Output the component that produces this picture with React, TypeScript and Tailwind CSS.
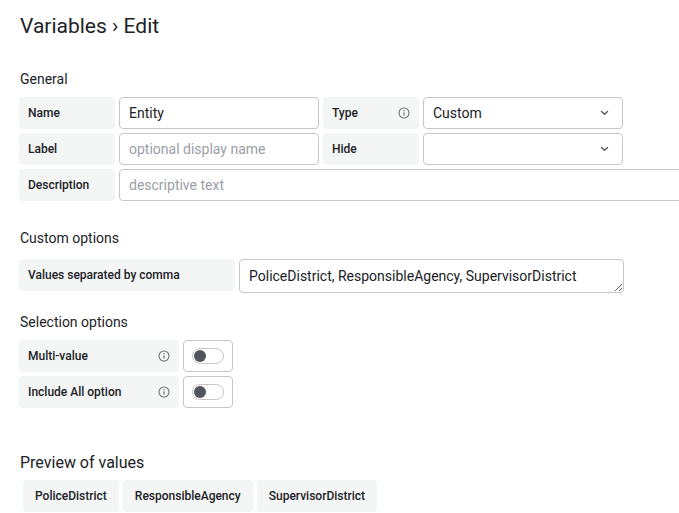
import React from "react";

const InfoIcon = () => (
  <svg width="12" height="12" viewBox="0 0 12 12" fill="none" className="shrink-0">
    <circle cx="6" cy="6" r="5" stroke="#6e7178" strokeWidth="1.1" />
    <rect x="5.4" y="5.2" width="1.2" height="3.3" rx="0.5" fill="#6e7178" />
    <circle cx="6" cy="3.7" r="0.7" fill="#6e7178" />
  </svg>
);

const Chevron = () => (
  <svg width="9" height="6" viewBox="0 0 9 6" fill="none">
    <path d="M1.5 1.5 4.5 4.3 7.5 1.5" stroke="#55585e" strokeWidth="1.4" strokeLinecap="round" strokeLinejoin="round" />
  </svg>
);

interface LabelProps {
  text: string;
  width: string;
  info?: boolean;
}

const FieldLabel: React.FC<LabelProps> = ({ text, width, info }) => (
  <div
    className={`${width} h-8 shrink-0 rounded bg-[#f4f5f5] pl-[9px] pr-[9px] flex items-center justify-between text-[12px] font-medium text-[#202226]`}
  >
    <span>{text}</span>
    {info && <InfoIcon />}
  </div>
);

const TextInput = ({ value, placeholder, width }: { value?: string; placeholder?: string; width: string }) => (
  <input
    type="text"
    defaultValue={value}
    placeholder={placeholder}
    className={`${width} h-8 shrink-0 rounded-sm border border-[#c7c7c7] bg-white px-[9px] text-[14px] text-[#202226] placeholder:text-[#9a9ea5] outline-none`}
  />
);

const Select = ({ value }: { value?: string }) => (
  <div className="w-[200px] h-8 shrink-0 rounded-sm border border-[#c7c7c7] bg-white pl-[9px] pr-[13px] flex items-center justify-between text-[14px] text-[#202226]">
    <span>{value}</span>
    <Chevron />
  </div>
);

const Toggle = () => (
  <div className="w-[50px] h-8 shrink-0 rounded-sm border border-[#c7c7c7] bg-white pl-2 flex items-center">
    <div className="w-8 h-4 rounded-full border border-[#c7c7c7] bg-white flex items-center pl-px">
      <div className="w-3 h-3 rounded-full bg-[#52545c]" />
    </div>
  </div>
);

const Heading = ({ children, className = "" }: { children: React.ReactNode; className?: string }) => (
  <h3 className={`text-[14px] leading-[18px] text-[#202226] ${className}`}>{children}</h3>
);

export default function App() {
  const preview = ["PoliceDistrict", "ResponsibleAgency", "SupervisorDistrict"];

  return (
    <div
      className="w-full h-[513px] overflow-hidden bg-white pl-[19px] pt-[13px]"
      style={{ fontFamily: "Roboto, 'Liberation Sans', sans-serif" }}
    >
      <h1 className="ml-px text-[21px] leading-[26px] text-[#202226]">Variables › Edit</h1>

      <Heading className="mt-[31px] ml-px">General</Heading>
      <div className="mt-[9px] flex flex-col gap-1">
        <div className="flex gap-1">
          <FieldLabel text="Name" width="w-[96px]" />
          <TextInput value="Entity" width="w-[200px]" />
          <FieldLabel text="Type" width="w-[96px]" info />
          <Select value="Custom" />
        </div>
        <div className="flex gap-1">
          <FieldLabel text="Label" width="w-[96px]" />
          <TextInput placeholder="optional display name" width="w-[200px]" />
          <FieldLabel text="Hide" width="w-[96px]" />
          <Select />
        </div>
        <div className="flex gap-1">
          <FieldLabel text="Description" width="w-[96px]" />
          <TextInput placeholder="descriptive text" width="w-[600px]" />
        </div>
      </div>

      <Heading className="mt-[28px] ml-px">Custom options</Heading>
      <div className="mt-3 flex items-start gap-1">
        <FieldLabel text="Values separated by comma" width="w-[216px]" />
        <textarea
          defaultValue="PoliceDistrict, ResponsibleAgency, SupervisorDistrict"
          className="w-[385px] h-[34px] shrink-0 rounded-sm border border-[#c7c7c7] bg-white px-[9px] pt-[7px] text-[14px] leading-[18px] text-[#202226] outline-none overflow-hidden"
        />
      </div>

      <Heading className="mt-5 ml-px">Selection options</Heading>
      <div className="mt-[9px] flex flex-col gap-1">
        <div className="flex gap-1">
          <FieldLabel text="Multi-value" width="w-[160px]" info />
          <Toggle />
        </div>
        <div className="flex gap-1">
          <FieldLabel text="Include All option" width="w-[160px]" info />
          <Toggle />
        </div>
      </div>

      <h3 className="mt-[44px] ml-px text-[16px] leading-[21px] text-[#202226]">Preview of values</h3>
      <div className="mt-[7px] ml-1 flex gap-1">
        {preview.map((v) => (
          <div
            key={v}
            className="h-8 rounded bg-[#f4f5f5] px-3 flex items-center text-[12px] font-medium text-[#202226]"
          >
            {v}
          </div>
        ))}
      </div>
    </div>
  );
}
